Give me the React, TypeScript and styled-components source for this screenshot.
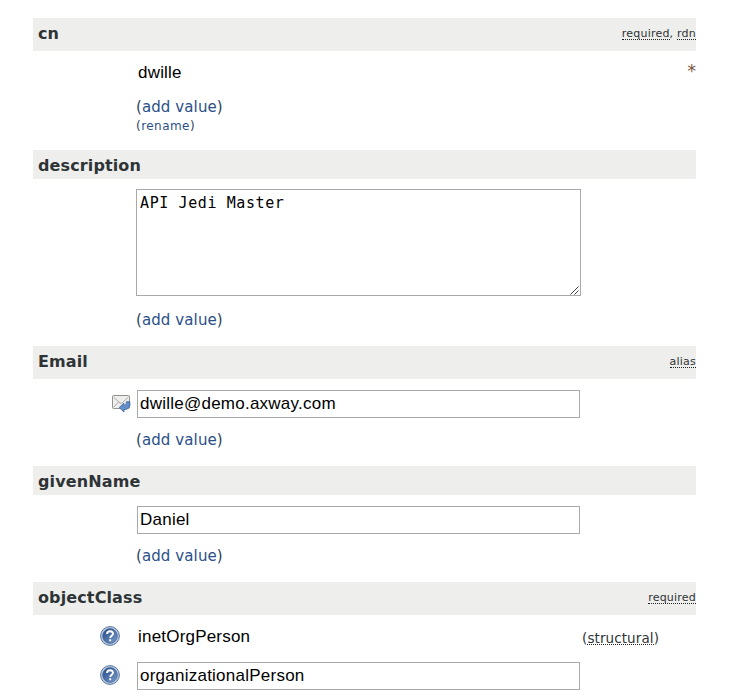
import React from 'react';
import styled, { createGlobalStyle } from 'styled-components';

const Global = createGlobalStyle`
  * { box-sizing: border-box; }
  body { margin: 0; background: #fff; overflow: hidden; font-family: "DejaVu Sans", Verdana, sans-serif; }
`;

const Form = styled.form`
  width: 663px;
  height: 698px;
  margin-left: 33px;
  padding-top: 18px;
  overflow: hidden;
`;

const Header = styled.div<{ $h: number }>`
  height: ${p => p.$h}px;
  padding: ${p => (p.$h === 33 ? '0 0 2px 5px' : '2px 0 0 5px')};
  display: flex;
  justify-content: space-between;
  align-items: center;
  background: #eeeeec;
  color: #2e3436;
`;

const Name = styled.b`
  font: bold 16px/20px "DejaVu Sans", sans-serif;
  letter-spacing: 0.12px;
`;

const Notes = styled.span`
  font-size: 11px;
  line-height: 12px;
  letter-spacing: 0.22px;
  color: #2e3436;
`;

const Abbr = styled.span`
  display: inline-block;
  height: 12px;
  line-height: 12px;
  border-bottom: 1px dotted #222;
`;

const Body = styled.div<{ $h: number; $top: number }>`
  height: ${p => p.$h}px;
  padding-top: ${p => p.$top}px;
`;

const Row = styled.div<{ $h: number }>`
  height: ${p => p.$h}px;
  display: grid;
  grid-template-columns: 103px 446px 1fr;
`;

const IconCell = styled.div`
  display: flex;
  justify-content: flex-end;
  padding: 4px 5px 0 0;
`;

const HelpCell = styled(IconCell)<{ $top: number }>`
  padding: ${p => p.$top}px 16px 0 0;
`;

const Value = styled.span`
  font: 17px/26px "Liberation Sans", Arial, sans-serif;
  letter-spacing: 0.2px;
  color: #000;
  padding-left: 2px;
`;

const Input = styled.input`
  width: 443px;
  height: 28px;
  margin-left: 1px;
  padding: 1px 2px;
  border: 1px solid #a9a9a9;
  font: 17px "Liberation Sans", Arial, sans-serif;
  letter-spacing: 0.24px;
  color: #000;
  outline: 0;
`;

const Area = styled.textarea`
  width: 445px;
  height: 107px;
  padding: 3px;
  border: 1px solid #a9a9a9;
  font: 15px/20px "DejaVu Sans Mono", monospace;
  letter-spacing: 0.6px;
  color: #000;
  resize: none;
`;

const AreaBox = styled.div`
  position: relative;
  width: 445px;
  height: 107px;
`;

const Grip = styled.svg`
  position: absolute;
  right: 2px;
  bottom: 1px;
`;

const Link = styled.div<{ $small?: boolean }>`
  margin-left: 103px;
  font-size: ${p => (p.$small ? 12 : 15)}px;
  line-height: ${p => (p.$small ? 18 : 20)}px;
  letter-spacing: ${p => (p.$small ? 0.45 : 0.1)}px;
  color: #2e3f5c;
`;

const Anchor = styled.a`
  color: #2b5088;
`;

const Star = styled.span`
  justify-self: end;
  font-size: 17px;
  line-height: 22px;
  color: #765339;
`;

const Structural = styled.span`
  padding-top: 6px;
  font-size: 13.5px;
  line-height: 17px;
  letter-spacing: 0.1px;
  color: #2e3436;

  ${Abbr} {
    height: 15px;
    line-height: 17px;
  }
`;

const Help = () => (
  <svg width="20" height="20" viewBox="0 0 20 20">
    <defs>
      <linearGradient id="blue" x1="0" y1="0" x2="1" y2="1">
        <stop offset="0" stopColor="#244982" />
        <stop offset="1" stopColor="#7b9cce" />
      </linearGradient>
    </defs>
    <circle cx="10" cy="10" r="9.4" fill="#c0cee2" stroke="#53749f" />
    <circle cx="10" cy="10" r="7.4" fill="url(#blue)" stroke="#375c94" strokeWidth=".6" />
    <path d="M7 8Q7.1 5.2 10 5.2T13 7.8C13 9.6 10.2 9.8 10.2 12M10.2 13.2V15.2" fill="none" stroke="#fff" strokeWidth="1.9" />
  </svg>
);

const Mail = () => (
  <svg width="20" height="20" viewBox="0 0 20 20">
    <rect x="1.5" y="1.5" width="17" height="13" rx="1" fill="#eeeeec" stroke="#92938f" />
    <path d="M2.5 3l6.5 6q1 .8 2 0l6.5-6M2.5 13.5l5-5.5" fill="none" stroke="#aaa" />
    <path d="M8.2 13.5l4.8-4.3v2.5q2.7-.2 2.5-4h3.3q1.5 7.5-5.8 8v2.4z" fill="#648fc8" stroke="#3a65a4" strokeWidth=".8" />
  </svg>
);

const AddLink = () => <Link>(<Anchor>add value</Anchor>)</Link>;

export default function App() {
  return (
    <>
      <Global />
      <Form>
        <Header $h={33}><Name>cn</Name><Notes><Abbr>required</Abbr>, <Abbr>rdn</Abbr></Notes></Header>
        <Body $h={99} $top={9}>
          <Row $h={37}><i /><Value>dwille</Value><Star>*</Star></Row>
          <AddLink />
          <Link $small>(<Anchor>rename</Anchor>)</Link>
        </Body>
        <Header $h={29}><Name>description</Name></Header>
        <Body $h={167} $top={10}>
          <Row $h={121}>
            <i />
            <AreaBox>
              <Area defaultValue="API Jedi Master" spellCheck={false} />
              <Grip width="9" height="9" viewBox="0 0 9 9">
                <path d="M.5 8.5l8-8M4.5 8.5l4-4" fill="none" stroke="#444" />
              </Grip>
            </AreaBox>
          </Row>
          <AddLink />
        </Body>
        <Header $h={33}><Name>Email</Name><Notes><Abbr>alias</Abbr></Notes></Header>
        <Body $h={87} $top={11}>
          <Row $h={40}><IconCell><Mail /></IconCell><Input defaultValue="dwille@demo.axway.com" /></Row>
          <AddLink />
        </Body>
        <Header $h={29}><Name>givenName</Name></Header>
        <Body $h={87} $top={11}>
          <Row $h={40}><i /><Input defaultValue="Daniel" /></Row>
          <AddLink />
        </Body>
        <Header $h={33}><Name>objectClass</Name><Notes><Abbr>required</Abbr></Notes></Header>
        <Body $h={83} $top={9}>
          <Row $h={38}><HelpCell $top={2}><Help /></HelpCell><Value>inetOrgPerson</Value><Structural>(<Abbr>structural</Abbr>)</Structural></Row>
          <Row $h={38}><HelpCell $top={3}><Help /></HelpCell><Input defaultValue="organizationalPerson" /></Row>
        </Body>
      </Form>
    </>
  );
}
